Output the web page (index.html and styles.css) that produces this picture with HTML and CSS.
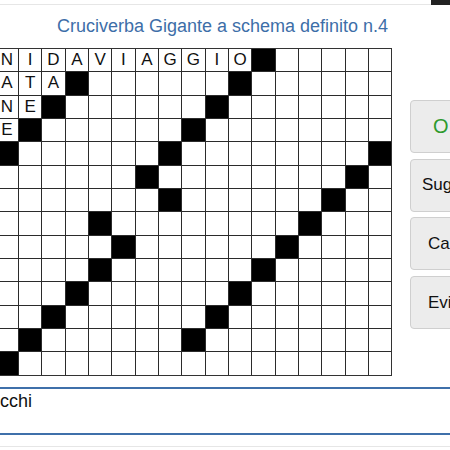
FILE: index.html
```
<!DOCTYPE html>
<html lang="it">
<head>
<meta charset="utf-8">
<title>Cruciverba Gigante a schema definito n.4</title>
<link rel="stylesheet" href="styles.css">
</head>
<body>
<div class="topbar"><span class="topbar-block"></span></div>
<h1 class="title">Cruciverba Gigante a schema definito n.4</h1>
<div class="main">
  <div class="grid">
    <span class="c">N</span><span class="c">I</span><span class="c">D</span><span class="c">A</span><span class="c">V</span><span class="c">I</span><span class="c">A</span><span class="c">G</span><span class="c">G</span><span class="c">I</span><span class="c">O</span><span class="c b"></span><span class="c"></span><span class="c"></span><span class="c"></span><span class="c"></span><span class="c"></span>
    <span class="c">A</span><span class="c">T</span><span class="c">A</span><span class="c b"></span><span class="c"></span><span class="c"></span><span class="c"></span><span class="c"></span><span class="c"></span><span class="c"></span><span class="c b"></span><span class="c"></span><span class="c"></span><span class="c"></span><span class="c"></span><span class="c"></span><span class="c"></span>
    <span class="c">N</span><span class="c">E</span><span class="c b"></span><span class="c"></span><span class="c"></span><span class="c"></span><span class="c"></span><span class="c"></span><span class="c"></span><span class="c b"></span><span class="c"></span><span class="c"></span><span class="c"></span><span class="c"></span><span class="c"></span><span class="c"></span><span class="c"></span>
    <span class="c">E</span><span class="c b"></span><span class="c"></span><span class="c"></span><span class="c"></span><span class="c"></span><span class="c"></span><span class="c"></span><span class="c b"></span><span class="c"></span><span class="c"></span><span class="c"></span><span class="c"></span><span class="c"></span><span class="c"></span><span class="c"></span><span class="c"></span>
    <span class="c b"></span><span class="c"></span><span class="c"></span><span class="c"></span><span class="c"></span><span class="c"></span><span class="c"></span><span class="c b"></span><span class="c"></span><span class="c"></span><span class="c"></span><span class="c"></span><span class="c"></span><span class="c"></span><span class="c"></span><span class="c"></span><span class="c b"></span>
    <span class="c"></span><span class="c"></span><span class="c"></span><span class="c"></span><span class="c"></span><span class="c"></span><span class="c b"></span><span class="c"></span><span class="c"></span><span class="c"></span><span class="c"></span><span class="c"></span><span class="c"></span><span class="c"></span><span class="c"></span><span class="c b"></span><span class="c"></span>
    <span class="c"></span><span class="c"></span><span class="c"></span><span class="c"></span><span class="c"></span><span class="c"></span><span class="c"></span><span class="c b"></span><span class="c"></span><span class="c"></span><span class="c"></span><span class="c"></span><span class="c"></span><span class="c"></span><span class="c b"></span><span class="c"></span><span class="c"></span>
    <span class="c"></span><span class="c"></span><span class="c"></span><span class="c"></span><span class="c b"></span><span class="c"></span><span class="c"></span><span class="c"></span><span class="c"></span><span class="c"></span><span class="c"></span><span class="c"></span><span class="c"></span><span class="c b"></span><span class="c"></span><span class="c"></span><span class="c"></span>
    <span class="c"></span><span class="c"></span><span class="c"></span><span class="c"></span><span class="c"></span><span class="c b"></span><span class="c"></span><span class="c"></span><span class="c"></span><span class="c"></span><span class="c"></span><span class="c"></span><span class="c b"></span><span class="c"></span><span class="c"></span><span class="c"></span><span class="c"></span>
    <span class="c"></span><span class="c"></span><span class="c"></span><span class="c"></span><span class="c b"></span><span class="c"></span><span class="c"></span><span class="c"></span><span class="c"></span><span class="c"></span><span class="c"></span><span class="c b"></span><span class="c"></span><span class="c"></span><span class="c"></span><span class="c"></span><span class="c"></span>
    <span class="c"></span><span class="c"></span><span class="c"></span><span class="c b"></span><span class="c"></span><span class="c"></span><span class="c"></span><span class="c"></span><span class="c"></span><span class="c"></span><span class="c b"></span><span class="c"></span><span class="c"></span><span class="c"></span><span class="c"></span><span class="c"></span><span class="c"></span>
    <span class="c"></span><span class="c"></span><span class="c b"></span><span class="c"></span><span class="c"></span><span class="c"></span><span class="c"></span><span class="c"></span><span class="c"></span><span class="c b"></span><span class="c"></span><span class="c"></span><span class="c"></span><span class="c"></span><span class="c"></span><span class="c"></span><span class="c"></span>
    <span class="c"></span><span class="c b"></span><span class="c"></span><span class="c"></span><span class="c"></span><span class="c"></span><span class="c"></span><span class="c"></span><span class="c b"></span><span class="c"></span><span class="c"></span><span class="c"></span><span class="c"></span><span class="c"></span><span class="c"></span><span class="c"></span><span class="c"></span>
    <span class="c b"></span><span class="c"></span><span class="c"></span><span class="c"></span><span class="c"></span><span class="c"></span><span class="c"></span><span class="c"></span><span class="c"></span><span class="c"></span><span class="c"></span><span class="c"></span><span class="c"></span><span class="c"></span><span class="c"></span><span class="c"></span><span class="c"></span>
  </div>
  <div class="actions">
    <button class="btn btn-ok">OK</button>
    <button class="btn btn-hint">Suggerimento</button>
    <button class="btn">Cancella</button>
    <button class="btn">Evidenzia</button>
  </div>
</div>
<div class="clue">Occhi</div>
<div class="footer-line"></div>
</body>
</html>
```

FILE: styles.css
```
html, body {
  margin: 0;
  padding: 0;
  background: #ffffff;
  overflow: hidden;
  width: 450px;
  height: 450px;
  font-family: "Liberation Sans", Arial, sans-serif;
}

.topbar {
  height: 4px;
  border-bottom: 1px solid #e6e6e6;
  display: flex;
  justify-content: flex-end;
}

.topbar-block {
  width: 19px;
  height: 5px;
  background: #222222;
}

.title {
  margin: 11px 5px 0 0;
  font-size: 18px;
  font-weight: normal;
  line-height: 21px;
  text-align: center;
  color: #3d6ea8;
}

.main {
  display: flex;
  align-items: flex-start;
  margin-top: 11px;
  margin-left: -5.33px;
}

.grid {
  display: grid;
  grid-template-columns: repeat(17, 22.33px);
  grid-auto-rows: 22.33px;
  gap: 1px;
  background: #2b2b2b;
  border: 1.5px solid #333333;
  flex: none;
}

.c {
  background: #ffffff;
  display: flex;
  align-items: center;
  justify-content: center;
  font-size: 17px;
  color: #111111;
}

.c.b {
  background: #000000;
}

.actions {
  flex: none;
  display: flex;
  flex-direction: column;
  gap: 5.7px;
  margin-left: 17.7px;
  margin-top: 52px;
}

.btn {
  width: 110px;
  height: 53px;
  padding: 0 0 0 17px;
  border: 1px solid #cfcfcf;
  border-radius: 4px;
  background: #ececec;
  font-family: "Liberation Sans", Arial, sans-serif;
  font-size: 17px;
  color: #111111;
  text-align: left;
  white-space: nowrap;
  overflow: hidden;
}

.btn-hint {
  padding-left: 11px;
}

.btn-ok {
  padding-left: 22px;
  font-size: 20px;
  letter-spacing: 4px;
  color: #2e9a2e;
}

.clue {
  margin-top: 11px;
  margin-left: -14px;
  border-top: 2px solid #3f70aa;
  border-bottom: 2px solid #3f70aa;
  padding-top: 2px;
  box-sizing: border-box;
  height: 48px;
  font-size: 18px;
  line-height: 21px;
  color: #111111;
}

.footer-line {
  margin-top: 11px;
  border-top: 1px solid #e6e6e6;
}
```
